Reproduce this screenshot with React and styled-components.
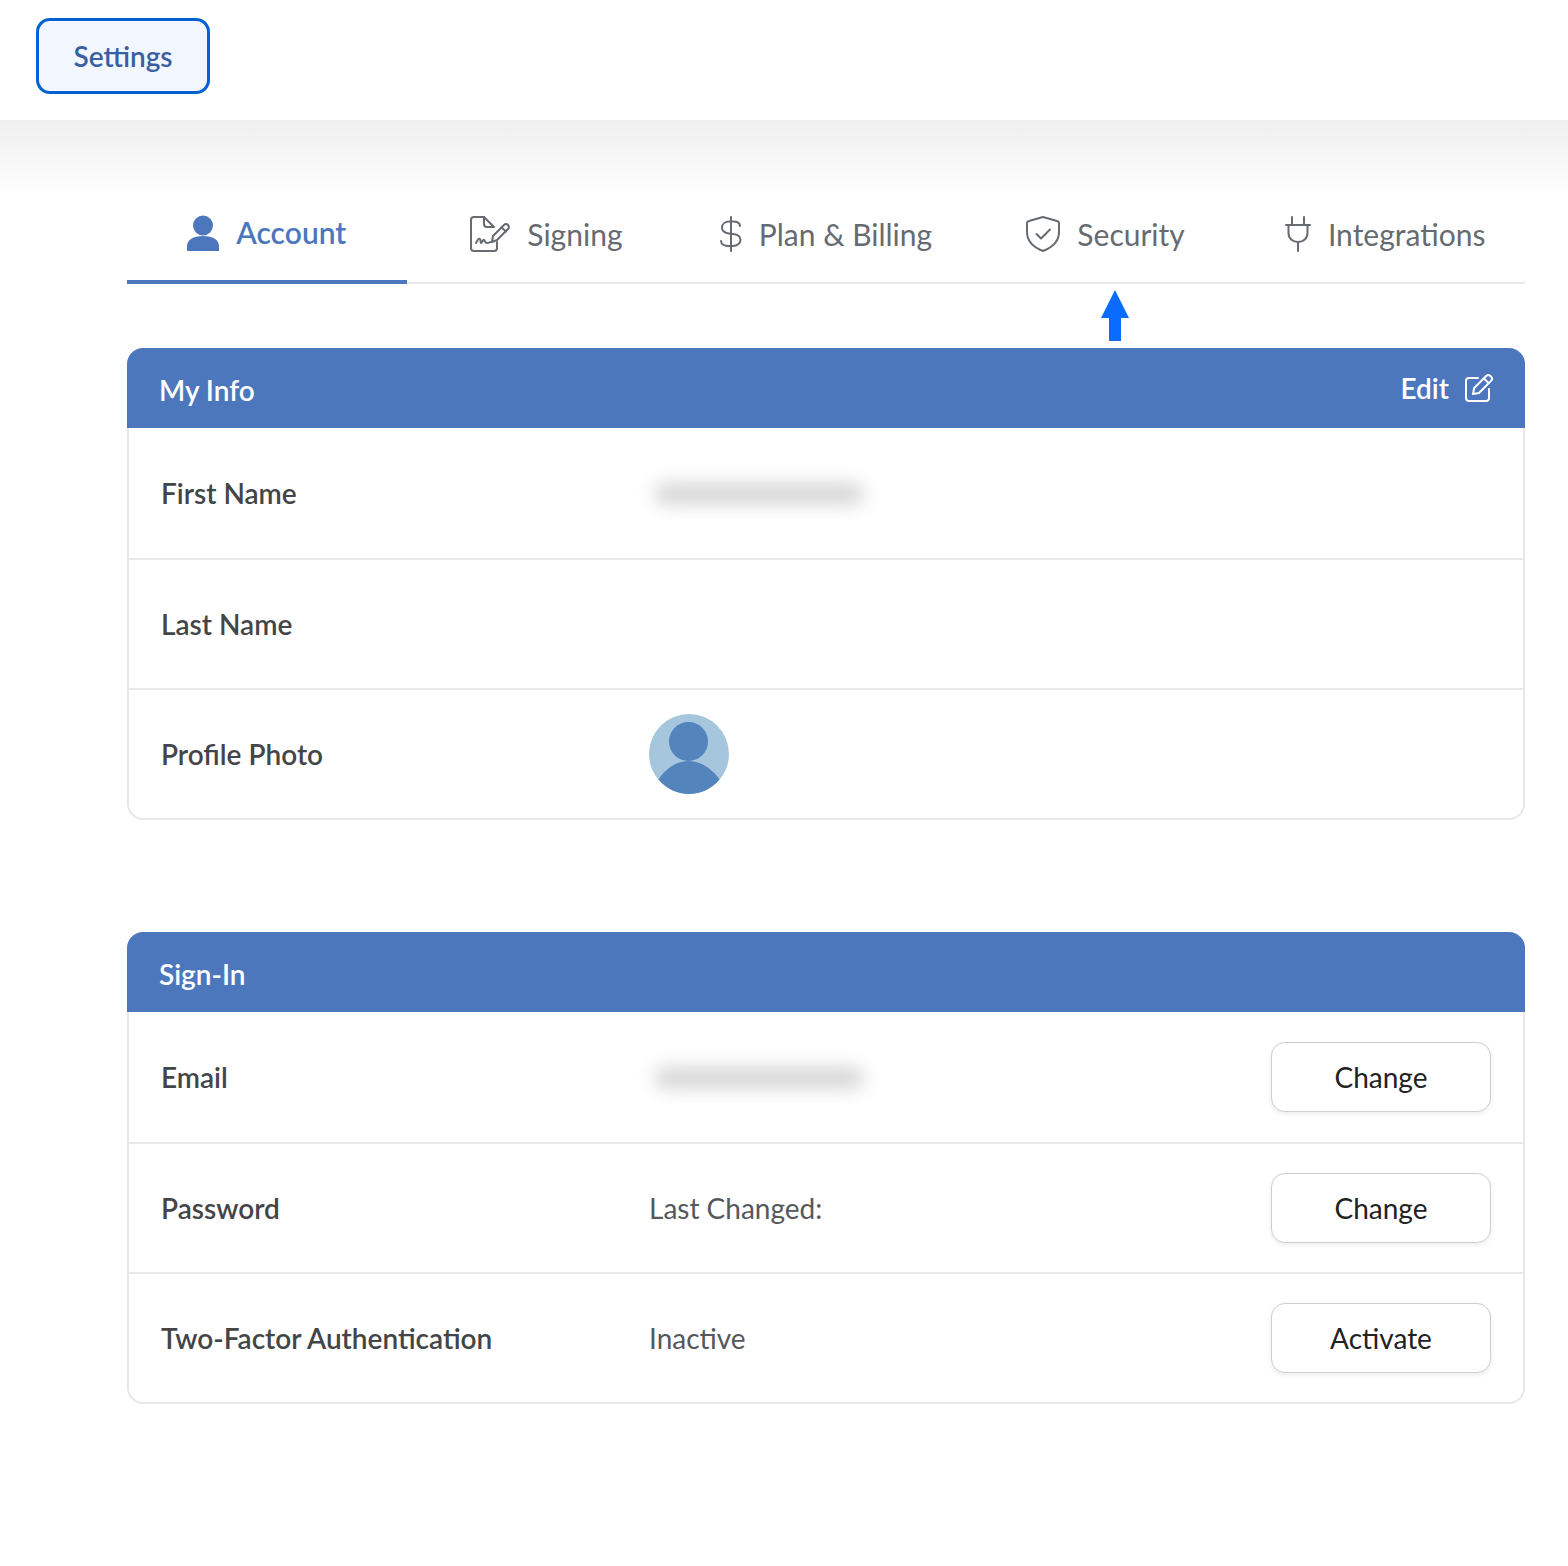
import React from "react";
import styled, { createGlobalStyle } from "styled-components";

const GlobalStyle = createGlobalStyle`
  html, body {
    margin: 0;
    padding: 0;
    background: #fff;
    font-family: Lato, "Open Sans", sans-serif;
  }
  * {
    box-sizing: border-box;
  }
`;

const AccountIcon = () => (
  <svg width="32" height="37" viewBox="0 0 32 37" fill="#4c77bd">
    <circle cx="16" cy="11.5" r="10" />
    <path d="M0 37v-5C0 26 6 22 16 22s16 4 16 10v5z" />
  </svg>
);

const SigningIcon = () => (
  <svg width="40" height="36" viewBox="0 0 40 36" fill="none" stroke="#666b72" strokeWidth="2" strokeLinecap="round" strokeLinejoin="round">
    <path d="M14 1H4a3 3 0 0 0-3 3v28a3 3 0 0 0 3 3h20a3 3 0 0 0 3-3v-6" />
    <path d="M14 1v7a3 3 0 0 0 3 3h7L14 1z" />
    <path d="M6 27c2-4 3-5 4-4s0 4 1 4 2-4 3-3 1 3 3 3 3-1 4-1" />
    <path d="M22 26l1-6 11-11c1.200-1.200 3-1.200 4 0s1.200 2.800 0 4L27 24z" />
    <path d="M31.500 11.500l4.500 4" />
  </svg>
);

const DollarIcon = () => (
  <svg width="22" height="36" viewBox="0 0 22 36" fill="none" stroke="#666b72" strokeWidth="2" strokeLinecap="round">
    <path d="M11 1v34" />
    <path d="M20 10c0-3-3-4.500-7-4.500H9.500C5 5.500 2 8 2 11.500S5 17 9 17.500l4 .5c4.500.5 7.500 2.500 7.500 6s-3.500 6-7.500 6H9c-4.500 0-8-2-8-5" />
  </svg>
);

const ShieldIcon = () => (
  <svg width="34" height="36" viewBox="0 0 34 36" fill="none" stroke="#666b72" strokeWidth="2" strokeLinecap="round" strokeLinejoin="round">
    <path d="M17 1l14 4c1.200.3 2 1 2 2.500V16c0 9-7 15.500-16 19C8 31.500 1 25 1 16V7.500C1 6 1.800 5.300 3 5z" />
    <path d="M10.500 18l4.500 4.500 9-9" />
  </svg>
);

const PlugIcon = () => (
  <svg width="26" height="36" viewBox="0 0 26 36" fill="none" stroke="#666b72" strokeWidth="2" strokeLinecap="round" strokeLinejoin="round">
    <path d="M7 1v7M19 1v7" />
    <path d="M1 9h24" />
    <path d="M3.500 9v8c0 5.500 4 9 9.500 9s9.500-3.500 9.500-9V9" />
    <path d="M13 26v9" />
  </svg>
);

const EditIcon = () => (
  <svg width="28" height="28" viewBox="0 0 28 28" fill="none" stroke="#fff" strokeWidth="2" strokeLinecap="round" strokeLinejoin="round">
    <path d="M13 4H4a3 3 0 0 0-3 3v17a3 3 0 0 0 3 3h17a3 3 0 0 0 3-3v-9" />
    <path d="M8 20l1.200-6L21.500 1.800c1-1 2.500-1 3.600 0l1.200 1.200c1 1 1 2.500 0 3.600L14 19z" />
    <path d="M19 4.500l4.500 4.500" />
  </svg>
);

const UpArrow = () => (
  <svg width="28" height="51" viewBox="0 0 28 51" fill="#0a6cff">
    <path d="M14 0l14 28h-8v23H8V28H0z" />
  </svg>
);

const AvatarIcon = () => (
  <svg width="80" height="80" viewBox="0 0 80 80">
    <circle cx="40" cy="40" r="40" fill="#a5c6dd" />
    <circle cx="39.500" cy="27.500" r="19.500" fill="#5484bc" />
    <path d="M9.500 65.500C17 54 28 47 39.500 47s23 7 31 18.500C63 74.500 52 80 40 80S17 74.500 9.500 65.500z" fill="#5484bc" />
  </svg>
);

const tabs = [
  { label: "Account", icon: <AccountIcon />, active: true },
  { label: "Signing", icon: <SigningIcon /> },
  { label: "Plan & Billing", icon: <DollarIcon /> },
  { label: "Security", icon: <ShieldIcon /> },
  { label: "Integrations", icon: <PlugIcon /> },
];

const App = () => {
  return (
    <Page>
      <GlobalStyle />
      <TopBar>
        <SettingsButton>Settings</SettingsButton>
      </TopBar>
      <Shade />
      <Content>
        <Tabs>
          {tabs.map(tab => (
            <Tab key={tab.label} $active={tab.active}>
              {tab.icon}
              <span>{tab.label}</span>
            </Tab>
          ))}
          <ArrowMark>
            <UpArrow />
          </ArrowMark>
        </Tabs>

        <Panel>
          <PanelHeader>
            <span>My Info</span>
            <EditLink>
              Edit
              <EditIcon />
            </EditLink>
          </PanelHeader>
          <PanelBody>
            <Row>
              <Label>First Name</Label>
              <Redacted>
                <RedactedBar />
              </Redacted>
            </Row>
            <Row>
              <Label>Last Name</Label>
            </Row>
            <Row>
              <Label>Profile Photo</Label>
              <Avatar>
                <AvatarIcon />
              </Avatar>
            </Row>
          </PanelBody>
        </Panel>

        <SignInPanel>
          <PanelHeader>
            <span>Sign-In</span>
          </PanelHeader>
          <PanelBody>
            <Row>
              <Label>Email</Label>
              <Redacted>
                <RedactedBar />
              </Redacted>
              <ActionButton>Change</ActionButton>
            </Row>
            <Row>
              <Label>Password</Label>
              <Value>Last Changed:</Value>
              <ActionButton>Change</ActionButton>
            </Row>
            <Row>
              <Label>Two-Factor Authentication</Label>
              <Value>Inactive</Value>
              <ActionButton>Activate</ActionButton>
            </Row>
          </PanelBody>
        </SignInPanel>
      </Content>
    </Page>
  );
};

export default App;

const Page = styled.div`
  min-height: 1566px;
  background: #fff;
`;

const TopBar = styled.header`
  height: 120px;
  padding: 18px 36px 0;
`;

const SettingsButton = styled.button`
  width: 174px;
  height: 76px;
  border: 3px solid #0062d1;
  border-radius: 14px;
  background: #f2f7ff;
  color: #3a5fa3;
  font-family: Lato, sans-serif;
  font-size: 28px;
  font-weight: 600;
  padding: 0;
`;

const Shade = styled.div`
  height: 74px;
  background: linear-gradient(#efefef, #fdfdfd 95%, #fff);
`;

const Content = styled.main`
  padding: 0 43px 0 127px;
`;

const Tabs = styled.nav`
  position: relative;
  display: flex;
  height: 90px;
  border-bottom: 2px solid #e8e8e8;
`;

const Tab = styled.div`
  flex: 1;
  display: flex;
  align-items: center;
  justify-content: center;
  gap: ${props => (props.$active ? "17px" : "17px")};
  height: 90px;
  padding-bottom: 10px;
  font-size: 30px;
  font-weight: ${props => (props.$active ? 600 : 400)};
  color: ${props => (props.$active ? "#4c77bd" : "#666b72")};
  border-bottom: ${props => (props.$active ? "4px solid #4c77bd" : "none")};
  margin-bottom: -2px;
`;

const ArrowMark = styled.div`
  position: absolute;
  left: 974px;
  top: 96px;
  line-height: 0;
`;

const Panel = styled.section`
  margin-top: 64px;
`;

const SignInPanel = styled(Panel)`
  margin-top: 112px;
`;

const PanelHeader = styled.div`
  display: flex;
  align-items: center;
  justify-content: space-between;
  height: 80px;
  padding: 4px 32px 0;
  border-radius: 16px 16px 0 0;
  background: #4c77bd;
  color: #fff;
  font-size: 28px;
  font-weight: 600;
`;

const EditLink = styled.div`
  display: flex;
  align-items: center;
  gap: 16px;
  margin-top: -4px;
`;

const PanelBody = styled.div`
  border: 2px solid #e8e8e8;
  border-top: none;
  border-radius: 0 0 16px 16px;
`;

const Row = styled.div`
  display: grid;
  grid-template-columns: 488px 1fr auto;
  align-items: center;
  height: 130px;
  padding: 0 32px;
  & + & {
    border-top: 2px solid #e8e8e8;
  }
`;

const Label = styled.div`
  font-size: 28px;
  font-weight: 600;
  color: #444548;
`;

const Value = styled.div`
  font-size: 28px;
  color: #55585c;
`;

const Redacted = styled.div`
  width: 255px;
  height: 55px;
  margin-left: -19px;
  padding: 17px 0 0 24px;
  overflow: hidden;
`;

const RedactedBar = styled.div`
  width: 210px;
  height: 22px;
  border-radius: 11px;
  background: #d6d6d6;
  filter: blur(9px);
`;

const Avatar = styled.div`
  width: 80px;
  height: 80px;
  line-height: 0;
`;

const ActionButton = styled.button`
  grid-column: 3;
  width: 220px;
  height: 70px;
  border: 1px solid #cfcfd2;
  border-radius: 14px;
  background: #fff;
  box-shadow: 0 2px 5px rgba(0, 0, 0, 0.08);
  color: #222;
  font-family: Lato, sans-serif;
  font-size: 28px;
  padding: 0;
`;
